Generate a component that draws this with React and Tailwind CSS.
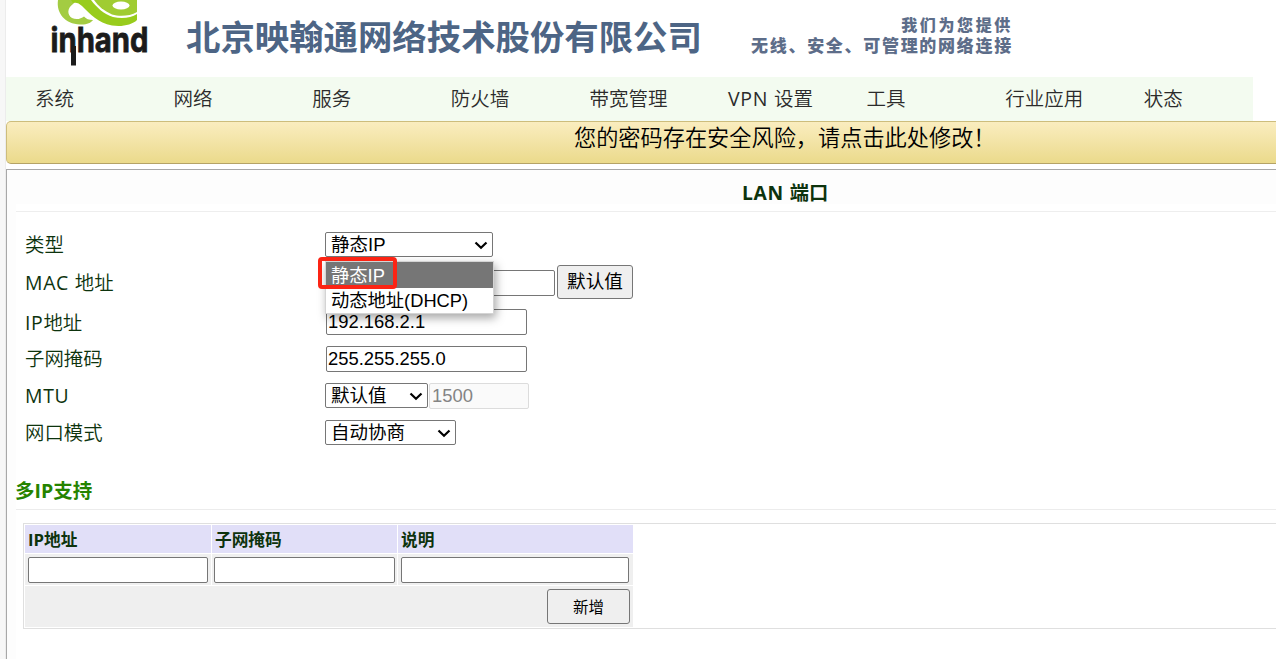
import React from "react";

const CJK = "font-['Open_Sans','Noto_Sans_CJK_SC',sans-serif]";
const FIELD = "font-['Liberation_Sans','Noto_Sans_CJK_SC',sans-serif]";

const menu = [
  { text: "系统" },
  { text: "网络" },
  { text: "服务" },
  { text: "防火墙" },
  { text: "带宽管理" },
  { latin: "VPN ", text: "设置" },
  { text: "工具" },
  { text: "行业应用" },
  { text: "状态" },
];

function Mixed({ latin, text }) {
  return (
    <>
      {latin && <span className="font-normal tracking-[0.7px]">{latin}</span>}
      {text}
    </>
  );
}

function Chevron() {
  return (
    <svg width="14" height="9" viewBox="0 0 14 9" fill="none" stroke="#000" strokeWidth="2.2">
      <path d="M1.5 1.5 L7 6.8 L12.5 1.5" />
    </svg>
  );
}

function Select({ value, className }) {
  return (
    <button className={`flex h-[25px] items-center justify-between rounded-[2px] border border-[#767676] bg-white pl-[5px] pr-1 text-[18.5px] leading-none text-black ${FIELD} ${className}`}>
      <span className="whitespace-nowrap">{value}</span>
      <Chevron />
    </button>
  );
}

function Input({ value = "", className = "", disabled = false, label }) {
  return (
    <input
      aria-label={label}
      defaultValue={value}
      disabled={disabled}
      className={`h-[26px] rounded-[2px] border px-[1px] py-0 text-[18.4px] leading-none ${FIELD} ${disabled ? "border-[#dcdcdc] bg-[#fafafa] text-[#848484]" : "border-[#767676] bg-white text-black"} ${className}`}
    />
  );
}

function Row({ latin, label, height, className = "", children }) {
  return (
    <div className={`flex items-center ${height}`}>
      <div className={`w-[300px] shrink-0 whitespace-pre text-[19.4px] font-[350] leading-none ${className}`}>
        <Mixed latin={latin} text={label} />
      </div>
      {children}
    </div>
  );
}

function Header() {
  return (
    <header className="flex h-[77px] items-start">
      <svg className="ml-[34px] shrink-0" width="130" height="77" viewBox="40 0 130 77">
        <path d="M58 0 C56 13 65 24 80 24.500 C86 25 91 23 93 20 C89 20 86 19 84 16.500 C81 19 76 20 72 18 C67 15 67 8 73 4 L77 0 Z" fill="#a3cc42" />
        <path d="M71 0 H91 C97 8 104 14 113 17 C122 19 131 18 137 14 V20 C132 25 122 27 112 25.500 C98 23 90 14 82 6 C79 3 76 2 73 3 Z" fill="#98cc1c" />
        <path d="M94 0 H137 V12 C130 16 120 17 112 14.500 C104 11 98 6 94 0 Z" fill="#a0cc32" />
        <ellipse cx="121" cy="5.500" rx="8.500" ry="4" fill="#fff" />
        <text x="50.500" y="51.5" textLength="98" lengthAdjust="spacingAndGlyphs" fontFamily="Inter, sans-serif" fontWeight="700" fontSize="34" fill="#1b1b1b" stroke="#1b1b1b" strokeWidth="0.8">inhand</text>
        <rect x="71" y="46" width="5" height="19.500" fill="#1b1b1b" />
      </svg>
      <h1 className={`ml-[16px] mt-[12px] whitespace-nowrap text-[34.4px] font-bold leading-[50px] text-[#4d6585] ${CJK}`}>北京映翰通网络技术股份有限公司</h1>
      <div className={`ml-[45px] mt-[15px] w-[264px] whitespace-nowrap text-right font-black leading-[20px] text-[#5d6d89] ${CJK}`}>
        <div className="-mr-[2px] text-[16px] leading-[20px] tracking-[2.6px]">我们为您提供</div>
        <div className="-mr-[2px] mt-px text-[17px] leading-[20px] tracking-[1.7px]">无线、安全、可管理的网络连接</div>
      </div>
    </header>
  );
}

function IpTable() {
  return (
    <div className="ml-[7px] mt-[13px] border-y border-l border-[#dfdfdf] p-px">
      <div className="grid w-[608px] grid-cols-[186px_185px_235px] gap-px text-[16.7px]">
        {["IP地址", "子网掩码", "说明"].map((t) => (
          <div key={t} className="flex h-[28px] items-center bg-[#e1dff8] pl-[3px] pt-[2px] font-bold">{t}</div>
        ))}
        <div className="h-[31px] bg-[#efefef] pl-[3px] pt-[3px]"><Input label="IP地址" className="block w-[180px]" /></div>
        <div className="h-[31px] bg-[#efefef] pl-[2px] pt-[3px]"><Input label="子网掩码" className="block w-[181px]" /></div>
        <div className="h-[31px] bg-[#efefef] pl-[3px] pt-[3px]"><Input label="说明" className="block w-[228px]" /></div>
        <div className="col-span-3 flex h-[41px] justify-end bg-[#efefef] pr-[3px] pt-[3px]">
          <button className="h-[35px] w-[83px] rounded-[3px] border border-[#767676] bg-[#efefef] pt-[2px] text-[15.5px] text-black">新增</button>
        </div>
      </div>
    </div>
  );
}

export default function App() {
  return (
    <div className={`flex h-[659px] w-[1276px] overflow-hidden bg-[#f7f7f7] pl-[5px] text-[#0d330d] ${CJK}`}>
      <div className="min-w-0 flex-1 border-l border-[#ececec] bg-white">
        <Header />
        <nav className="flex h-[44px] w-[1247px] items-center bg-[#f3fbf0] pl-[29px] text-[19.500px] text-[#2b2b2b]">
          {menu.map((m) => (
            <a key={m.text} className="w-[138.6px] shrink-0 whitespace-pre font-[350]">
              <Mixed {...m} />
            </a>
          ))}
        </nav>
        <div className="-mr-2 h-[43px] rounded-[5px] border border-[#cdbd7c] border-b-[#b5a366] bg-linear-to-b from-[#faedbf] to-[#ebda8b] pl-[567px] text-[22.2px] font-[350] leading-[32px] text-black">
          您的密码存在安全风险，请点击此处修改！
        </div>
        <main className="mt-[5px] h-[500px] border-l border-t border-[#a8a8a8] bg-[#fdfdfd] pl-[9px]">
          <h2 className="h-[34px] pl-[726px] text-[19.3px] font-bold leading-[46px]"><span className="tracking-[0.7px]">LAN </span>端口</h2>
          <section className="h-[460px] bg-white">
            <div className="h-[8px] border-b border-[#eeeeee]" />
            <div className="pl-[9px] pt-[14px]">
              <Row label="类型" height="h-[37px]" className="pt-px">
                <div className="relative">
                  <Select value="静态IP" className="w-[168px] pt-px" />
                  <div className={`absolute left-0 top-[29px] z-10 w-[169px] border border-[#d4d4d4] bg-white text-[18.3px] text-black shadow-[2px_4px_9px_rgba(0,0,0,0.35)] ${FIELD}`}>
                    <div className="h-[26px] bg-[#767676] pl-[5px] leading-[27px] text-white">静态IP</div>
                    <div className="h-[25px] whitespace-nowrap pl-[5px] leading-[26px]">动态地址(DHCP)</div>
                  </div>
                  <div className="absolute -left-[7px] top-[25px] z-20 h-[32px] w-[79px] rounded-[4px] border-4 border-[#fc2414]" />
                </div>
              </Row>
              <Row latin="MAC " label="地址" height="h-[39px]">
                <Input label="MAC 地址" className="ml-px w-[229px]" />
                <button className="-mt-[2px] ml-[2px] h-[34px] w-[76px] rounded-[3px] border border-[#767676] bg-[#efefef] text-[18.6px] leading-none text-black">默认值</button>
              </Row>
              <Row latin="IP" label="地址" height="h-[40px]" className="pt-[2px]">
                <Input label="IP地址" value="192.168.2.1" className="ml-px w-[201px]" />
              </Row>
              <Row label="子网掩码" height="h-[34px]">
                <Input label="子网掩码" value="255.255.255.0" className="ml-px w-[201px]" />
              </Row>
              <Row latin="MTU" height="h-[39px]">
                <Select value="默认值" className="w-[103px] pt-px" />
                <Input label="MTU" value="1500" disabled className="ml-px w-[100px] pl-[2px]" />
              </Row>
              <Row label="网口模式" height="h-[35px]">
                <Select value="自动协商" className="w-[131px] pt-px" />
              </Row>
            </div>
            <h3 className="mt-[24px] h-[36px] border-b border-[#ececec] text-[19.5px] font-bold leading-[34px] text-[#258300]"><span className="-ml-px">多IP支持</span></h3>
            <IpTable />
          </section>
        </main>
      </div>
    </div>
  );
}
